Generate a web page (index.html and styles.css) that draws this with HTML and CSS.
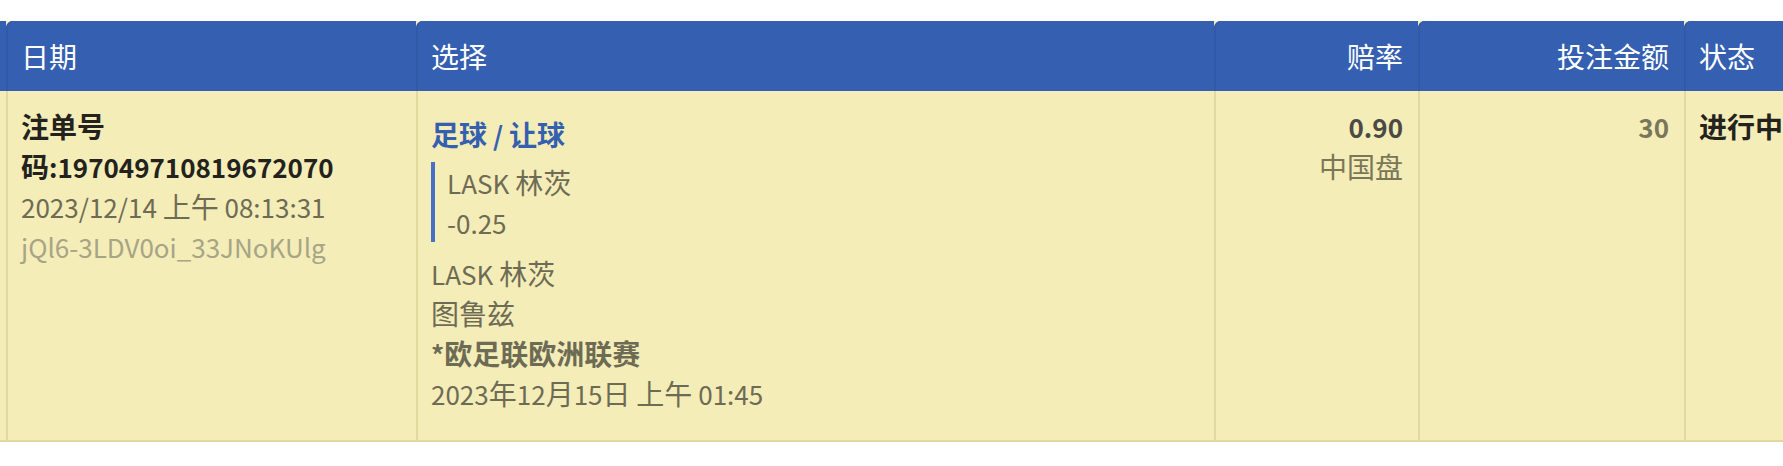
FILE: index.html
```html
<!DOCTYPE html>
<html lang="zh-CN">
<head>
<meta charset="utf-8">
<title>注单</title>
<link rel="stylesheet" href="styles.css">
</head>
<body>
<div class="page">
  <div class="table-wrap">
    <table class="bets">
      <colgroup>
        <col class="col-0">
        <col class="col-date">
        <col class="col-sel">
        <col class="col-odds">
        <col class="col-stake">
        <col class="col-status">
      </colgroup>
      <thead>
        <tr>
          <th class="c0"></th>
          <th>日期</th>
          <th>选择</th>
          <th class="num">赔率</th>
          <th class="num">投注金额</th>
          <th>状态</th>
        </tr>
      </thead>
      <tbody>
        <tr>
          <td class="c0"></td>
          <td class="date">
            <div class="bet-no">注单号<span class="nb">码<span class="lt">:197049710819672070</span></span></div>
            <div class="placed"><span class="lt">2023/12/14 </span>上午<span class="lt"> 08:13:31</span></div>
            <div class="ref"><span class="lt">jQl6-3LDV0oi_33JNoKUlg</span></div>
          </td>
          <td class="sel">
            <div class="sel-title">足球<span class="lt"> / </span>让球</div>
            <div class="pick">
              <div><span class="lt">LASK </span>林茨</div>
              <div><span class="lt">-0.25</span></div>
            </div>
            <div><span class="lt">LASK </span>林茨</div>
            <div>图鲁兹</div>
            <div class="league"><span class="lt">*</span>欧足联欧洲联赛</div>
            <div><span class="lt">2023</span>年<span class="lt">12</span>月<span class="lt">15</span>日<span class="lt"> </span>上午<span class="lt"> 01:45</span></div>
          </td>
          <td class="num odds">
            <div class="price"><span class="lt">0.90</span></div>
            <div class="odds-type">中国盘</div>
          </td>
          <td class="num stake"><span class="lt">30</span></td>
          <td class="status">进行中</td>
        </tr>
      </tbody>
    </table>
  </div>
</div>
</body>
</html>
```
FILE: styles.css
```css
html, body {
  margin: 0;
  padding: 0;
  background: #ffffff;
}

body {
  font-family: "Noto Sans CJK SC", "Noto Sans", sans-serif;
  font-size: 28px;
  line-height: 40px;
  color: #6e6b55;
  overflow: hidden;
}

.lt {
  font-size: 26px;
  line-height: 1;
}

.nb {
  white-space: nowrap;
}

.page {
  padding-top: 21px;
}

.table-wrap {
  width: 100%;
  overflow: hidden;
}

.bets {
  width: 1900px;
  table-layout: fixed;
  border-collapse: separate;
  border-spacing: 0;
  background: #f4edb8;
  border-bottom: 2px solid #e2d9a1;
}

.col-0 { width: 6px; }
.col-date { width: 410px; }
.col-sel { width: 798px; }
.col-odds { width: 204px; }
.col-stake { width: 266px; }
.col-status { width: 216px; }

.bets th,
.bets td {
  box-sizing: border-box;
  padding: 0 15px 0 13px;
  text-align: left;
}

.bets th {
  height: 70px;
  background: #355fb0;
  color: #ffffff;
  font-weight: normal;
  vertical-align: middle;
  border-left: 2px solid #3059a6;
  border-top-left-radius: 7px;
}

.bets thead tr {
  background: #355fb0;
}

.bets td {
  vertical-align: top;
  padding-top: 15px;
  padding-bottom: 27px;
  border-left: 2px solid #e2d9a1;
}

.bets th.c0,
.bets td.c0 {
  padding: 0;
  border-left: 0;
  border-radius: 0;
}

.bets .num {
  text-align: right;
}

.bet-no {
  font-weight: bold;
  color: #23221c;
}

.placed {
  color: #6e6b55;
}

.ref {
  color: #a8a486;
}

.sel-title {
  color: #3560b0;
  font-weight: bold;
  margin: 8px 0 8px;
}

.pick {
  border-left: 4px solid #4470c8;
  padding-left: 12px;
  margin-bottom: 11px;
}

.league {
  font-weight: bold;
}

.price {
  font-weight: bold;
  color: #4b4a44;
}

.odds-type {
  color: #7a7658;
}

.stake {
  font-weight: bold;
  color: #79765a;
}

.status {
  font-weight: bold;
  color: #23221c;
}
```
